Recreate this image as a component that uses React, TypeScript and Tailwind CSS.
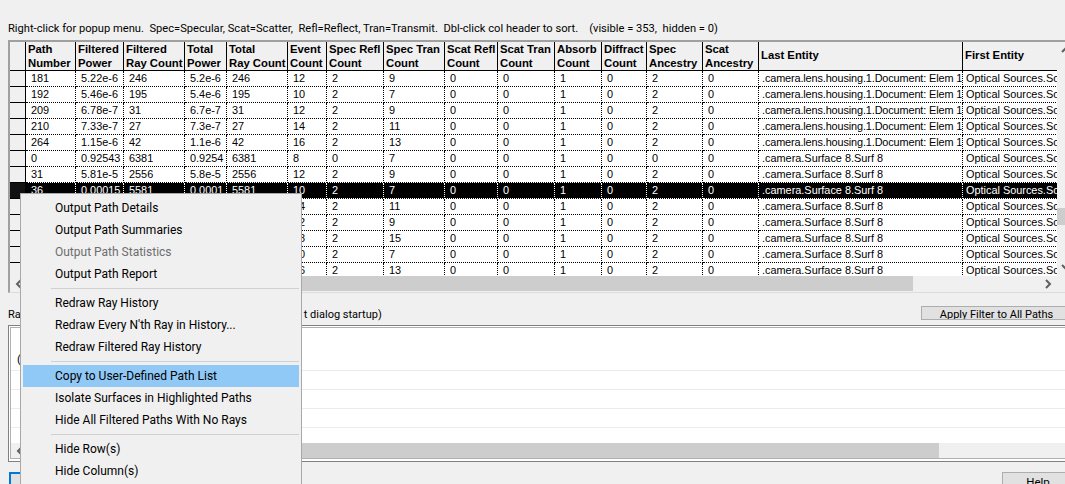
const ROW = "grid grid-cols-[16px_50px_48px_61px_42px_61px_39px_57px_61px_53px_57px_47px_45px_56px_56px_204px_95px]";
const UI = "font-['Roboto',sans-serif]";

const headers: string[][] = [
  ["Path", "Number"], ["Filtered", "Power"], ["Filtered", "Ray Count"], ["Total", "Power"], ["Total", "Ray Count"],
  ["Event", "Count"], ["Spec Refl", "Count"], ["Spec Tran", "Count"], ["Scat Refl", "Count"], ["Scat Tran", "Count"],
  ["Absorb", "Count"], ["Diffract", "Count"], ["Spec", "Ancestry"], ["Scat", "Ancestry"], ["Last Entity"], ["First Entity"],
];

const LENS = ".camera.lens.housing.1.Document: Elem 1";
const SURF = ".camera.Surface 8.Surf 8";
const rows: (string | number)[][] = [
  [181, "5.22e-6", 246, "5.2e-6", 246, 12, 2, 9, 2, LENS],
  [192, "5.46e-6", 195, "5.4e-6", 195, 10, 2, 7, 2, LENS],
  [209, "6.78e-7", 31, "6.7e-7", 31, 12, 2, 9, 2, LENS],
  [210, "7.33e-7", 27, "7.3e-7", 27, 14, 2, 11, 2, LENS],
  [264, "1.15e-6", 42, "1.1e-6", 42, 16, 2, 13, 2, LENS],
  [0, "0.92543", 6381, "0.9254", 6381, 8, 0, 7, 0, SURF],
  [31, "5.81e-5", 2556, "5.8e-5", 2556, 12, 2, 9, 2, SURF],
  [36, "0.00015", 5581, "0.0001", 5581, 10, 2, 7, 2, SURF],
  [62, "3.11e-5", 1204, "3.1e-5", 1204, 14, 2, 11, 2, SURF],
  [75, "2.40e-5", 988, "2.4e-5", 988, 12, 2, 9, 2, SURF],
  [98, "1.07e-5", 410, "1.0e-5", 410, 18, 2, 15, 2, SURF],
  [104, "8.52e-6", 352, "8.5e-6", 352, 10, 2, 7, 2, SURF],
  [120, "6.09e-6", 274, "6.0e-6", 274, 16, 2, 13, 2, SURF],
];

function Row({ r, selected }: { r: (string | number)[]; selected: boolean }) {
  const cell = selected
    ? "h-4 pl-[5px] whitespace-nowrap overflow-hidden border-b border-r border-dotted border-b-white border-r-white text-white bg-black leading-[15px]"
    : "h-4 pl-[5px] whitespace-nowrap overflow-hidden border-b border-r border-dotted border-black text-black bg-white leading-[15px]";
  const wide = selected
    ? "h-4 pl-[3px] whitespace-nowrap overflow-hidden border-b border-r border-dotted border-b-white border-r-white text-white bg-black leading-[15px]"
    : r[9] === LENS
    ? "h-4 pl-[3px] tracking-[-0.13px] whitespace-nowrap overflow-hidden border-b border-r border-dotted border-black text-black bg-white leading-[15px]"
    : "h-4 pl-[3px] whitespace-nowrap overflow-hidden border-b border-r border-dotted border-black text-black bg-white leading-[15px]";
  const last = selected
    ? "h-4 pl-[3px] whitespace-nowrap overflow-hidden border-b border-dotted border-b-white text-white bg-black leading-[15px]"
    : "h-4 pl-[3px] whitespace-nowrap overflow-hidden border-b border-dotted border-black text-black bg-white leading-[15px]";
  const values = [r[0], r[1], r[2], r[3], r[4], r[5], r[6], r[7], 0, 0, 1, 0, r[8]];
  return (
    <div className={`${ROW} text-[10.9px]`}>
      <div className={selected ? "h-4 bg-[#111111] border-r border-b border-black" : "h-4 bg-[#f0f0f0] border-r border-b border-black"} />
      {values.map((v, i) => (
        <div key={i} className={cell}>{v}</div>
      ))}
      <div className={cell}>0</div>
      <div className={wide}>{r[9]}</div>
      <div className={last}>Optical Sources.Source 1</div>
    </div>
  );
}

function Chevron({ dir }: { dir: "left" | "right" | "up" | "down" }) {
  const pts = { left: "6,1 2,5 6,9", right: "2,1 6,5 2,9", up: "1,6 5,2 9,6", down: "1,2 5,6 9,2" }[dir];
  return (
    <svg width="10" height="10" viewBox="0 0 10 10" className="shrink-0">
      <polyline points={pts} fill="none" stroke="#606060" strokeWidth="2" />
    </svg>
  );
}

function HScroll({ thumb }: { thumb: string }) {
  return (
    <div className="h-[15px] shrink-0 bg-[#f0f0f0] flex items-center">
      <div className="w-[17px] flex justify-center pl-[2px]"><Chevron dir="left" /></div>
      <div className={thumb} />
      <div className="flex-1" />
      <div className="w-[17px] flex justify-center"><Chevron dir="right" /></div>
    </div>
  );
}

type Item = { t: string; disabled?: boolean; active?: boolean } | "sep";
const menu: Item[] = [
  { t: "Output Path Details" },
  { t: "Output Path Summaries" },
  { t: "Output Path Statistics", disabled: true },
  { t: "Output Path Report" },
  "sep",
  { t: "Redraw Ray History" },
  { t: "Redraw Every N'th Ray in History..." },
  { t: "Redraw Filtered Ray History" },
  "sep",
  { t: "Copy to User-Defined Path List", active: true },
  { t: "Isolate Surfaces in Highlighted Paths" },
  { t: "Hide All Filtered Paths With No Rays" },
  "sep",
  { t: "Hide Row(s)" },
  { t: "Hide Column(s)" },
];

function Menu() {
  return (
    <div className={`absolute left-[20px] top-[193px] w-[282px] h-[320px] bg-[#f0f0f0] border border-[#a8a8a8] pt-[3px] pl-[2px] pr-[2px] text-[12px] text-black ${UI}`}>
      {menu.map((m, i) =>
        m === "sep" ? (
          <div key={i} className="h-[7px] ml-[28px] flex items-center"><div className="h-px w-full bg-[#d0d0d0]" /></div>
        ) : (
          <div
            key={i}
            className={
              m.active
                ? "h-[22px] leading-[22px] pl-[32px] bg-[#90c8f6]"
                : m.disabled
                ? "h-[22px] leading-[22px] pl-[32px] text-[#6d6d6d]"
                : "h-[22px] leading-[22px] pl-[32px]"
            }
          >
            {m.t}
          </div>
        )
      )}
    </div>
  );
}

export default function App() {
  return (
    <div className="relative w-[1065px] h-[484px] overflow-hidden bg-[#f0f0f0] font-['Liberation_Sans',sans-serif] text-[11.3px] text-black">
      <div className={`h-[40px] pl-[8px] pt-[21px] text-[11.15px] leading-[16px] whitespace-pre ${UI}`}>
        {"Right-click for popup menu.  Spec=Specular, Scat=Scatter,  Refl=Reflect, Tran=Transmit.  Dbl-click col header to sort.    (visible = 353,  hidden = 0)"}
      </div>

      <div className="ml-[8px] w-[1080px] h-[253px] border-l-2 border-t-2 border-[#a0a0a0] border-b border-b-[#dcdcdc] flex">
        <div className="w-[1047px] shrink-0 flex flex-col">
          <div className="h-[234px] overflow-hidden">
            <div className={ROW}>
              <div className="h-[29px] bg-[#f0f0f0] border-r border-b border-black" />
              {headers.map((h, i) => (
                <div
                  key={i}
                  className={
                    i === 15
                      ? "h-[29px] pl-[2px] pb-[2px] bg-[#f0f0f0] border-b border-black font-bold leading-[14px] flex items-center whitespace-nowrap overflow-hidden"
                      : h.length === 1
                      ? "h-[29px] pl-[2px] pb-[2px] bg-[#f0f0f0] border-r border-b border-black font-bold leading-[14px] flex items-center whitespace-nowrap overflow-hidden"
                      : "h-[29px] pl-[2px] bg-[#f0f0f0] border-r border-b border-black font-bold leading-[14px] whitespace-nowrap overflow-hidden"
                  }
                >
                  <div>
                    {h.map((l) => (
                      <div key={l}>{l}</div>
                    ))}
                  </div>
                </div>
              ))}
            </div>
            {rows.map((r, i) => (
              <Row key={i} r={r} selected={i === 7} />
            ))}
          </div>
          <HScroll thumb="w-[867px] h-[15px] bg-[#cdcdcd] ml-[19px]" />
        </div>
        <div className="w-[17px] shrink-0 bg-[#f0f0f0] flex flex-col items-center pt-[4px]">
          <Chevron dir="up" />
          <div className="w-full h-[17px] mt-[152px] bg-[#cdcdcd]" />
          <div className="mt-[38px]"><Chevron dir="down" /></div>
        </div>
      </div>

      <div className={`h-[32px] ml-[8px] flex items-start pt-[13px] text-[11px] ${UI}`}>
        <span className="leading-[16px] mt-px">Ra</span>
        <span className="leading-[16px] mt-px ml-[283px]">t dialog startup)</span>
        <button className="ml-auto w-[151px] h-[14px] shrink-0 mr-[-7px] overflow-hidden border border-[#adadad] bg-[#e1e1e1] leading-[15px] text-center">
          Apply Filter to All Paths
        </button>
      </div>

      <div className="ml-[8px] w-[1080px] h-[137px] border border-[#808080] border-r-0 bg-white pt-px pl-px">
        <div className="h-[132px] border-l border-t border-b border-[#b0b0b0] flex flex-col">
          <div className="h-[115px] shrink-0 flex flex-col">
            <div className={`h-[42px] pl-[6px] pt-[24px] leading-[16px] ${UI}`}>(</div>
            <div className="h-[19px] border-t border-[#ececec]" />
            <div className="h-[19px] border-t border-[#ececec]" />
            <div className="h-[19px] border-t border-[#ececec]" />
            <div className="h-[16px] border-t border-[#ececec]" />
          </div>
          <HScroll thumb="w-[892px] h-[15px] bg-[#cdcdcd] ml-[19px]" />
        </div>
      </div>

      <div className="flex justify-between items-start pt-[10px] pl-[9px]">
        <div className="w-[60px] h-[24px] border-2 border-[#0078d7] bg-[#e1e1e1]" />
        <button className={`w-[72px] ml-auto mr-[-9px] h-[24px] border border-[#adadad] bg-[#e1e1e1] text-[11.5px] leading-[14px] text-center flex justify-center items-start pt-[2px] ${UI}`}>
          Help
        </button>
      </div>

      <Menu />
    </div>
  );
}
